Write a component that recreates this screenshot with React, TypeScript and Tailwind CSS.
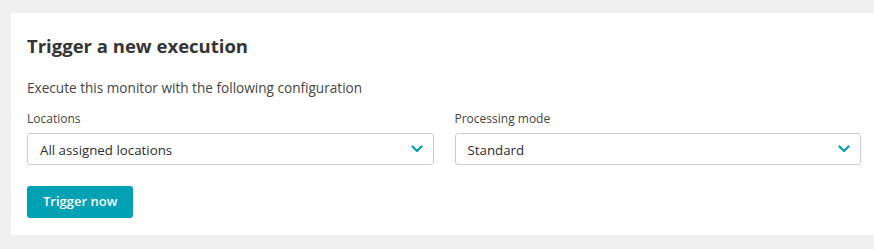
export default function App() {
  return (
    <div className="min-h-[249px] w-full bg-[#f0f0f0] pt-[13px] pb-[14px] pl-[11px]" style={{ fontFamily: '"Open Sans", sans-serif' }}>
      <div className="rounded-l-[3px] bg-white pl-4 pr-[13px] pt-[21px] pb-[17px] text-[#454646]">
        <h1 className="text-[18.5px] font-bold leading-[24px] text-[#353535]">Trigger a new execution</h1>
        <p className="mt-[21px] text-[13.6px] leading-[18px]">Execute this monitor with the following configuration</p>
        <div className="mt-[14px] grid grid-cols-2 gap-[21px]">
          <Select label="Locations" value="All assigned locations" />
          <Select label="Processing mode" value="Standard" />
        </div>
        <button type="button" className="mt-[21px] h-[32px] rounded-[3px] bg-[#00a1b2] px-[16px] text-[13px] font-semibold text-white">
          Trigger now
        </button>
      </div>
    </div>
  );
}

function Select({ label, value }: { label: string; value: string }) {
  return (
    <div>
      <div className="text-[12px] leading-[16px] text-[#454646]">{label}</div>
      <div className="mt-[6px] flex h-[32px] items-center justify-between rounded-[3px] border border-[#cccccc] pl-[12px] pr-[10px]">
        <span className="text-[13.3px] leading-[20px] text-[#2e2e2e] pt-[2px]">{value}</span>
        <svg width="12" height="8" viewBox="0 0 12 8" fill="none">
          <path d="M1.5 1.5 L6 6 L10.5 1.5" stroke="#00a1b2" strokeWidth="2.2" strokeLinecap="round" strokeLinejoin="round" />
        </svg>
      </div>
    </div>
  );
}
